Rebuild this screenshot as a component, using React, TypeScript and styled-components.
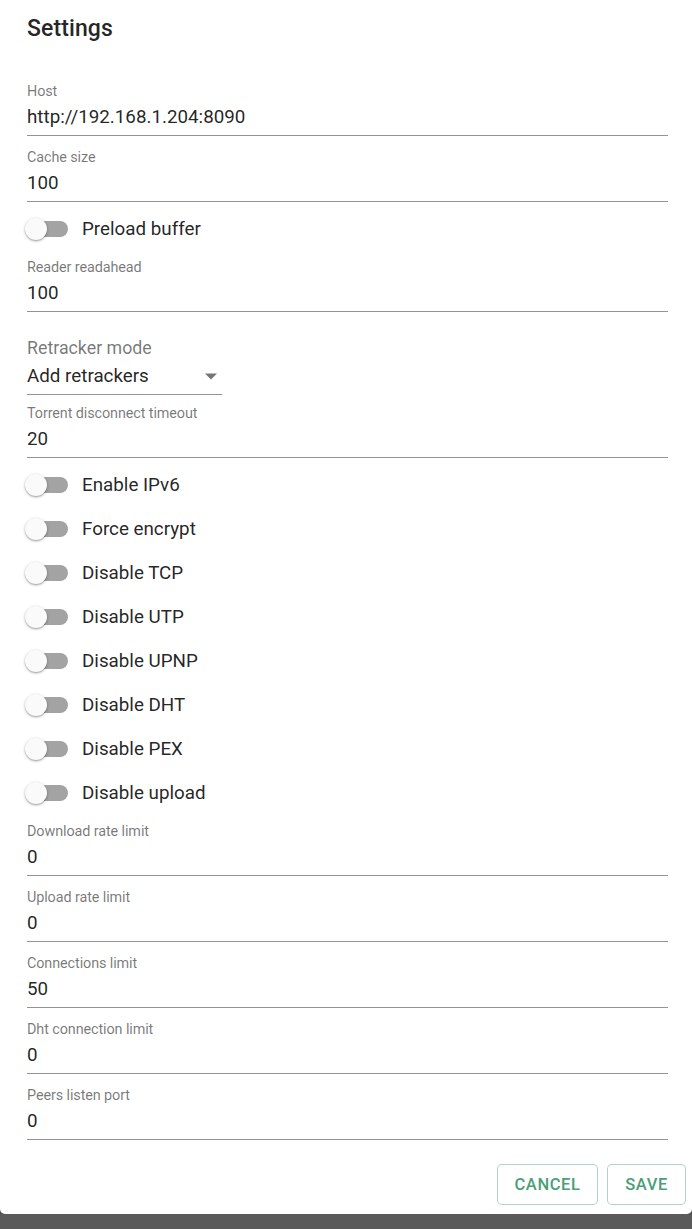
import React from "react";
import styled, { createGlobalStyle } from "styled-components";

const Global = createGlobalStyle`
  html, body { margin: 0; padding: 0; }
  body {
    background: #5a5a5a;
    font-family: Roboto, "Noto Sans", "Liberation Sans", sans-serif;
    -webkit-font-smoothing: antialiased;
  }
`;

const Dialog = styled.div`
  background: #ffffff;
  width: 692px;
  height: 1214px;
  box-sizing: border-box;
  border-radius: 0 0 5px 5px;
  display: flex;
  flex-direction: column;
  box-shadow: 0 6px 18px rgba(0, 0, 0, 0.35);
`;

const Title = styled.h2`
  margin: 0;
  padding: 15px 24px 0 27px;
  height: 28px;
  font-size: 23px;
  font-weight: 500;
  line-height: 28px;
  color: rgba(0, 0, 0, 0.87);
  letter-spacing: 0.1px;
`;

const Content = styled.div`
  display: flex;
  flex-direction: column;
  padding: 32px 24px 0 27px;
`;

const Field = styled.label`
  display: flex;
  flex-direction: column;
  margin: 9px 0 5px;
  border-bottom: 1px solid rgba(0, 0, 0, 0.42);
  height: 51px;
`;

const Label = styled.span`
  font-size: 14.4px;
  line-height: 16px;
  color: rgba(0, 0, 0, 0.54);
  letter-spacing: -0.1px;
`;

const Value = styled.span`
  margin-top: 4px;
  font-size: 18.8px;
  line-height: 26px;
  color: rgba(0, 0, 0, 0.87);
`;

const SwitchRow = styled.div`
  display: flex;
  align-items: center;
  height: 44px;
`;

const Track = styled.span`
  position: relative;
  display: block;
  width: 38px;
  height: 16px;
  margin-left: 3px;
  border-radius: 8px;
  background: #a3a3a3;
`;

const Thumb = styled.span`
  position: absolute;
  left: -5px;
  top: -3px;
  width: 22px;
  height: 22px;
  border-radius: 50%;
  background: #fafafa;
  box-shadow: 0 1px 3px rgba(0, 0, 0, 0.3), 0 1px 1px rgba(0, 0, 0, 0.14);
`;

const SwitchText = styled.span`
  margin-left: 14px;
  font-size: 18.8px;
  color: rgba(0, 0, 0, 0.87);
`;

const SelectBox = styled.div`
  display: flex;
  flex-direction: column;
  width: 195px;
  margin: 19px 0 2px;
`;

const SelectLabel = styled.span`
  font-size: 17.8px;
  line-height: 24px;
  color: rgba(0, 0, 0, 0.54);
`;

const SelectInput = styled.div`
  display: flex;
  align-items: center;
  justify-content: space-between;
  height: 32px;
  border-bottom: 1px solid rgba(0, 0, 0, 0.42);
  font-size: 18.8px;
  color: rgba(0, 0, 0, 0.87);
  padding-bottom: 2px;
  svg { margin-right: 5px; }
`;

const Actions = styled.div`
  margin-top: auto;
  display: flex;
  justify-content: flex-end;
  gap: 9px;
  padding: 0 6px 9px 0;
`;

const Button = styled.button<{ $w: number }>`
  width: ${(p) => p.$w}px;
  height: 41px;
  background: #fff;
  border: 1px solid rgba(76, 165, 122, 0.45);
  border-radius: 5px;
  color: #4a9e78;
  font-family: Roboto, "Noto Sans", sans-serif;
  font-size: 16.5px;
  font-weight: 500;
  letter-spacing: 0.6px;
  text-transform: uppercase;
  padding: 0;
`;

const fields1 = [
  { label: "Host", value: "http://192.168.1.204:8090" },
  { label: "Cache size", value: "100" },
];

const switches = [
  "Enable IPv6",
  "Force encrypt",
  "Disable TCP",
  "Disable UTP",
  "Disable UPNP",
  "Disable DHT",
  "Disable PEX",
  "Disable upload",
];

const fields2 = [
  { label: "Download rate limit", value: "0" },
  { label: "Upload rate limit", value: "0" },
  { label: "Connections limit", value: "50" },
  { label: "Dht connection limit", value: "0" },
  { label: "Peers listen port", value: "0" },
];

const TextField = ({ label, value }: { label: string; value: string }) => (
  <Field>
    <Label>{label}</Label>
    <Value>{value}</Value>
  </Field>
);

const Toggle = ({ label }: { label: string }) => (
  <SwitchRow>
    <Track>
      <Thumb />
    </Track>
    <SwitchText>{label}</SwitchText>
  </SwitchRow>
);

export default function App() {
  return (
    <>
      <Global />
      <Dialog>
        <Title>Settings</Title>
        <Content>
          {fields1.map((f) => (
            <TextField key={f.label} {...f} />
          ))}
          <Toggle label="Preload buffer" />
          <TextField label="Reader readahead" value="100" />
          <SelectBox>
            <SelectLabel>Retracker mode</SelectLabel>
            <SelectInput>
              <span>Add retrackers</span>
              <svg width="12" height="7" viewBox="0 0 10 5">
                <path d="M0 0 L5 5 L10 0 Z" fill="rgba(0,0,0,0.54)" />
              </svg>
            </SelectInput>
          </SelectBox>
          <TextField label="Torrent disconnect timeout" value="20" />
          {switches.map((s) => (
            <Toggle key={s} label={s} />
          ))}
          {fields2.map((f) => (
            <TextField key={f.label} {...f} />
          ))}
        </Content>
        <Actions>
          <Button $w={101}>Cancel</Button>
          <Button $w={79}>Save</Button>
        </Actions>
      </Dialog>
    </>
  );
}
